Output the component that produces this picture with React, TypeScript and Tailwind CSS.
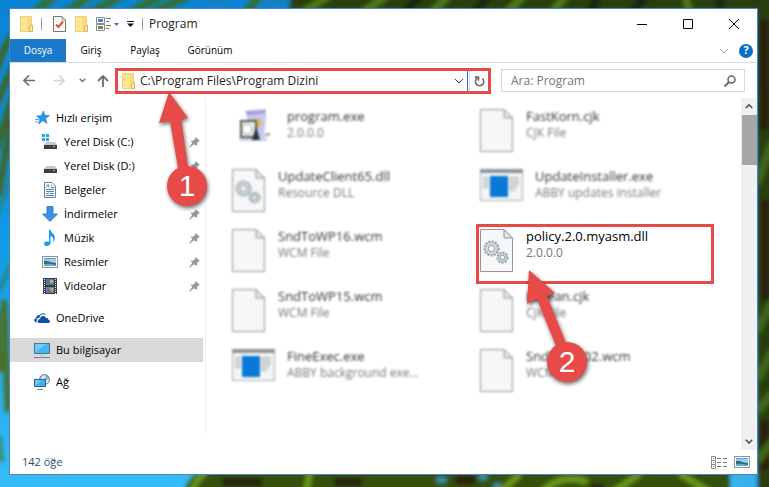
import { useState, type ReactNode } from 'react';

type FileKind = 'installer' | 'gears' | 'page' | 'app';

interface FileEntry {
    name: string;
    detail: string;
    kind: FileKind;
    active?: boolean;
}

const files: FileEntry[] = [
    { name: 'program.exe', detail: '2.0.0.0', kind: 'installer' },
    { name: 'FastKorn.cjk', detail: 'CJK File', kind: 'page' },
    { name: 'UpdateClient65.dll', detail: 'Resource DLL', kind: 'gears' },
    { name: 'UpdateInstaller.exe', detail: 'ABBY updates installer', kind: 'app' },
    { name: 'SndToWP16.wcm', detail: 'WCM File', kind: 'page' },
    { name: 'policy.2.0.myasm.dll', detail: '2.0.0.0', kind: 'gears', active: true },
    { name: 'SndToWP15.wcm', detail: 'WCM File', kind: 'page' },
    { name: 'Korean.cjk', detail: 'CJK File', kind: 'page' },
    { name: 'FineExec.exe', detail: 'ABBY background exe...', kind: 'app' },
    { name: 'SndToWP02.wcm', detail: 'WCM File', kind: 'page' },
];

/* ---------- desktop ---------- */

function Wallpaper() {
    return (
        <svg className="absolute inset-0 w-full h-full" viewBox="0 0 769 487" preserveAspectRatio="none" aria-hidden="true">
            <defs>
                <linearGradient id="sky" x1="0" y1="0" x2="0" y2="1">
                    <stop offset="0" stopColor="#0a84d4" />
                    <stop offset="0.5" stopColor="#0f9be6" />
                    <stop offset="1" stopColor="#36bcf6" />
                </linearGradient>
                <filter id="soft" x="-20%" y="-20%" width="140%" height="140%"><feGaussianBlur stdDeviation="2" /></filter>
            </defs>
            <rect width="769" height="487" fill="url(#sky)" />
            <g filter="url(#soft)">
                <path d="M290 -20H790V510H757V10H290Z" fill="#2b3d10" />
                <path d="M180 510Q185 474 205 470H730V510Z" fill="#35500f" />
                <g fill="none">
                    <path d="M30 16 62 -10M62 16 98 -10M88 14 132 -10M124 16 172 -10M150 14 200 -10M244 14 262 -6" stroke="#35702f" strokeWidth="8" />
                    <path d="M206 0H230M262 0H290" stroke="#1d7eae" strokeWidth="6" />
                    <path d="M300 14 335 -8M360 14 392 -8M430 14 452 -8M505 14 528 -8M550 14 570 -8M690 14 684 -8" stroke="#4d7a18" strokeWidth="7" />
                    <path d="M405 14 422 -8M475 14 490 -8M590 14 600 -8M630 14 650 -8M720 10V-8" stroke="#1e2608" strokeWidth="9" />
                    <path d="M-4 72Q4 44 14 34M-4 106Q4 84 14 66M-4 150 14 92M-2 196 12 118" stroke="#3f6420" strokeWidth="7" />
                    <path d="M-4 216Q4 200 12 172M-2 292 12 262" stroke="#2c8078" strokeWidth="4" />
                    <path d="M4 300 8 412M-3 310 0 372" stroke="#4f6a18" strokeWidth="6" />
                    <path d="M-1 436 2 462" stroke="#3f7f4e" strokeWidth="4" />
                    <path d="M190 496Q196 478 206 472M310 472 306 492M500 492 520 474M540 494Q560 472 588 482M610 494 640 474M680 474 710 492" stroke="#6a9a1c" strokeWidth="6" />
                    <path d="M222 482H262M334 482H362M455 480H476M590 488H604" stroke="#2a2408" strokeWidth="9" />
                    <path d="M437 480H446M479 477H487M494 486H500" stroke="#3f9fb4" strokeWidth="5" />
                    <path d="M764 20V130M765 200V300M764 420V470" stroke="#2c210f" strokeWidth="10" />
                    <path d="M757 184 773 140M757 332 773 300M757 380 773 350M757 412 773 392M757 462 773 440" stroke="#41661a" strokeWidth="8" />
                </g>
                <path d="M730 470H756L758 500H736Z" fill="#37b2ec" />
            </g>
        </svg>
    );
}

/* ---------- small icons ---------- */

function FolderIcon() {
    return (
        <svg width="14" height="16" viewBox="0 0 14 16" className="shrink-0" aria-hidden="true">
            <path d="M.5.5H11.500V9.500L12.500 10V15.500H.5Z" fill="#fbdc79" stroke="#efd07a" />
            <path d="M1 1H7V15H1Z" fill="#fde594" />
            <path d="M9.500 15.500V11L10.500 9.500H12.500V15.500Z" fill="#fdeaa8" stroke="#dcb54c" />
        </svg>
    );
}

function CheckPageIcon() {
    return (
        <svg width="13" height="16" viewBox="0 0 13 16" aria-hidden="true">
            <path d="M.5.5H9L12.500 4V15.500H.5Z" fill="#fafafa" stroke="#747474" />
            <path d="M9 .5V4H12.500" fill="none" stroke="#999" />
            <path d="M3 8.500 5.500 11 10 5.500" fill="none" stroke="#e8501c" strokeWidth="2" />
        </svg>
    );
}

function LayoutIcon() {
    return (
        <svg width="15" height="16" viewBox="0 0 15 16" aria-hidden="true">
            <path d="M.5 1.500H8.500V7.500H.5ZM.5 8.500H8.500V14.500H.5Z" fill="#fff" stroke="#8b8b8b" />
            <rect x="2" y="3" width="5" height="3" fill="#3c86d8" />
            <path d="M2 10H7V13H2Z" fill="#4c9850" />
            <path d="M4 10H7V12H5Z" fill="#d35a3c" />
            <path d="M10 2.500H15M10 5.500H13M10 9.500H15M10 12.500H13" stroke="#777" />
        </svg>
    );
}

function Chevron({ up = false, className }: { up?: boolean; className: string }) {
    return (
        <svg viewBox="0 0 10 6" className={className} fill="none" stroke="currentColor" aria-hidden="true">
            <path d={up ? 'M1 5 5 1 9 5' : 'M1 1 5 5 9 1'} />
        </svg>
    );
}

function StarIcon() {
    return (
        <svg width="15" height="14" viewBox="0 0 15 14" aria-hidden="true">
            <path d="M8.500 0 9.700 4.300 14.500 4.600 10.600 7.400 12 12.500 7.900 9.600 3.700 13 5 8.200 1.500 5 6.300 4.600Z" fill="#2798e4" stroke="#1877bd" strokeWidth=".6" />
            <path d="M0 8.500H4M0 11H3.500M2 5.500H4" stroke="#52aee8" />
        </svg>
    );
}

function DriveIcon({ system = false }: { system?: boolean }) {
    return (
        <svg width="16" height="16" viewBox="0 0 16 16" aria-hidden="true">
            <path d="M4 8H13L15 11H2Z" fill="#c7c7c7" />
            {system && <path d="M0 0H3V3H0ZM4 0H7V3H4ZM0 4H3V7H0ZM4 4H7V7H4Z" fill="#1fa7ee" />}
            <rect x="2" y="11" width="13" height="4" fill="#3e4144" />
            <rect x="11" y="12" width="2" height="1" fill="#3ef05a" />
        </svg>
    );
}

function DocumentIcon() {
    return (
        <svg width="16" height="16" viewBox="0 0 16 16" aria-hidden="true">
            <path d="M2.500.5H10L13.500 4V15.500H2.500Z" fill="#fff" stroke="#7a7f85" />
            <path d="M4 5.500 6 2.500 7 5.500M9 3.500H10M9 5.500H12M4 7.500H12M4 9.500H12M4 11.500H7M8 11.500H12M4 13.500H12" fill="none" stroke="#4087c4" />
        </svg>
    );
}

function DownloadIcon() {
    return (
        <svg width="16" height="16" viewBox="0 0 16 16" aria-hidden="true">
            <path d="M5 .5H11V8H15.500L8 15.500.5 8H5Z" fill="#3b93e3" stroke="#2575c2" strokeWidth=".8" />
        </svg>
    );
}

function MusicIcon() {
    return (
        <svg width="16" height="16" viewBox="0 0 16 16" aria-hidden="true">
            <path d="M7 0H8.500C9 3 13 4 13 8 13 9.500 12 11 11 12 12 8.500 11 7 8.500 6V13C8.500 15 6.500 16 4.700 16 3 16 2 15 2 13.800 2 12 4.500 11 7 12Z" fill="#159cf0" />
        </svg>
    );
}

function PictureIcon() {
    return (
        <svg width="16" height="12" viewBox="0 0 16 12" aria-hidden="true">
            <rect x=".5" y=".5" width="15" height="11" fill="#fff" stroke="#8d9298" />
            <rect x="2" y="2" width="12" height="8" fill="#9ccdf0" />
            <path d="M2 2H14V3H2Z" fill="#5b9be0" />
            <path d="M2 5Q5 4 8 6L14 7V10H2Z" fill="#2f6f76" />
            <path d="M2 8Q8 7 14 9V10H2Z" fill="#69a8c9" />
        </svg>
    );
}

function VideoIcon() {
    return (
        <svg width="16" height="16" viewBox="0 0 16 16" aria-hidden="true">
            <rect x="1" y="0" width="14" height="16" fill="#3a3a3a" />
            <path d="M2.500 1V16M13.500 1V16" stroke="#f4f4f4" strokeDasharray="1 1" />
            <rect x="4" y="1" width="8" height="6" fill="#3f78d6" />
            <rect x="4" y="9" width="8" height="6" fill="#4c86dc" />
            <path d="M5 5 7 3 8 5ZM4 14 7 11 9 14Z" fill="#d6414e" />
            <path d="M8 2H11V5H8ZM8 10H11V13H9Z" fill="#e8a72e" />
            <path d="M4 6H12V7H4Z" fill="#4d9a43" />
        </svg>
    );
}

function CloudIcon() {
    return (
        <svg width="16" height="10" viewBox="0 0 16 10" aria-hidden="true">
            <path d="M3 9.500C-.5 9.500-.7 5.500 2.200 5.200 2 2.500 4.700 1.700 5.700 2.200 7.200-.7 11.500-.5 12.200 2.500 9-.1 5.500 2 5.600 4.700 2.500 4.700 2 7.500 3 9.500Z" fill="#0f4fae" />
            <path d="M5.500 10C3 10 3 6 6 6 6.200 2.300 11 2.200 12 5 14 4.700 14.500 6 14.300 6.800 16.500 7 16.400 10 14.300 10Z" fill="#0f4fae" />
        </svg>
    );
}

function ComputerIcon() {
    return (
        <svg width="16" height="16" viewBox="0 0 16 16" aria-hidden="true">
            <rect x=".5" y="1.500" width="15" height="10" fill="#45b4f5" stroke="#4b7592" />
            <path d="M1 11 12 2H1Z" fill="#74caf9" />
            <path d="M0 15.500H16" stroke="#6a8396" />
            <path d="M6 13.500H10" stroke="#b5bcc2" />
        </svg>
    );
}

function NetworkIcon() {
    return (
        <svg width="16" height="16" viewBox="0 0 16 16" aria-hidden="true">
            <circle cx="10.500" cy="5.500" r="5" fill="#87b6c9" stroke="#4d7f98" strokeWidth=".8" />
            <path d="M8 2Q11 0 12 3L10 5 7 5ZM12 6 15 5 14 9 12 9Z" fill="#d7e9ec" />
            <rect x=".5" y="5.500" width="11" height="7" fill="#42b0f4" stroke="#34668a" />
            <path d="M1 12 8 6H1Z" fill="#6fc6f8" />
            <path d="M3 15.500H9" stroke="#6a8396" />
        </svg>
    );
}

function PinIcon() {
    return (
        <svg width="11" height="11" viewBox="0 0 11 11" className="shrink-0" aria-hidden="true">
            <path d="M6.500 0 11 4 9.500 4.500 8 6.500 7.500 9 5 7.300 1 10.500 0 10.500 3.300 6 1.500 3.800 4.500 3.500 6.200 1.800Z" fill="#8e99a4" />
        </svg>
    );
}

/* ---------- big file icons ---------- */

function Gear({ cx, cy, r }: { cx: number; cy: number; r: number }) {
    return (
        <g fill="none" stroke="#8d9aa4">
            <circle cx={cx} cy={cy} r={r} fill="#d5dde2" strokeWidth="2" strokeDasharray="2 1.300" />
            <circle cx={cx} cy={cy} r={r - 1} fill="#d5dde2" stroke="#b3bfc7" />
            <circle cx={cx} cy={cy} r={r / 2.2} fill="#f7f9fa" />
        </g>
    );
}

function PageIcon({ gears = false }: { gears?: boolean }) {
    return (
        <svg width="33" height="43" viewBox="0 0 33 43" className="shrink-0" aria-hidden="true">
            <path d="M.5.5H24L32.500 9V42.500H.5Z" fill="#f5f7f8" stroke="#949494" />
            <path d="M24 .5V9H32.500Z" fill="#e6e8e9" stroke="#949494" />
            {gears && <Gear cx={11.5} cy={19.5} r={7} />}
            {gears && <Gear cx={22.5} cy={28.5} r={5} />}
        </svg>
    );
}

function AppIcon() {
    return (
        <svg width="43" height="32" viewBox="0 0 43 32" className="shrink-0" aria-hidden="true">
            <rect x=".5" y=".5" width="42" height="31" fill="#f3f4f5" stroke="#a9adb0" />
            <rect width="43" height="4" fill="#8f9498" />
            <path d="M3 9H9M3 12H9M3 15H9M3 18H9M29 9H39M29 12H39M29 15H39M29 18H37M29 21H35" stroke="#c0c4c7" strokeWidth="2" />
            <rect x="10" y="7" width="18" height="21" fill="#0a78d7" />
        </svg>
    );
}

function InstallerIcon() {
    return (
        <svg width="43" height="33" viewBox="0 0 43 33" className="shrink-0" aria-hidden="true">
            <path d="M14 2 34 0 34 8 32 28 18 30Z" fill="#c6c6ef" />
            <path d="M13 2 33 1 34 4 15 6Z" fill="#9f9fd8" />
            <path d="M7 28H34L36 32H8Z" fill="#cdcdf0" />
            <path d="M20 10 29 11V18H20Z" fill="#efb640" />
            <path d="M9 12H24V28H9Z" fill="#eef3ee" stroke="#565a54" strokeWidth="2" />
            <circle cx="15" cy="20" r="5" fill="#fff" stroke="#9aa09a" />
            <path d="M24 17 28 31H20Z" fill="#27323f" />
            <path d="M33 26 38 25" stroke="#8a8a8a" strokeWidth="2" />
        </svg>
    );
}

const bigIcons: Record<FileKind, ReactNode> = {
    installer: <InstallerIcon />,
    gears: <PageIcon gears />,
    page: <PageIcon />,
    app: <AppIcon />,
};

/* ---------- callouts ---------- */

function Callout({ label, className, arrow, cx, cy }: { label: string; className: string; arrow: string; cx: number; cy: number }) {
    return (
        <svg width="80" height="126" viewBox="0 0 80 126" className={className}>
            <g className="drop-shadow-[1px_2px_2px_rgba(0,0,0,0.6)]" fill="#e84a4a">
                <path d={arrow} />
                <circle cx={cx} cy={cy} r="20" />
            </g>
            <text x={cx} y={cy + 10} textAnchor="middle" fill="#fff" className="font-['Liberation_Sans',sans-serif] text-[30px]">{label}</text>
        </svg>
    );
}

/* ---------- window parts ---------- */

function TitleBar() {
    return (
        <header className="flex h-[30px] items-center pl-[10px]">
            <FolderIcon />
            <span className="ml-[7px] h-3 w-px bg-gray-400" />
            <button aria-label="Özellikler" className="ml-[11px]"><CheckPageIcon /></button>
            <button aria-label="Yeni klasör" className="ml-[9px]"><FolderIcon /></button>
            <button aria-label="Düzen" className="ml-[7px] flex items-center gap-[3px]">
                <LayoutIcon />
                <svg width="5" height="3" viewBox="0 0 5 3" aria-hidden="true"><path d="M0 0H5L2.500 3Z" fill="#3f72b8" /></svg>
            </button>
            <button aria-label="Hızlı erişim araç çubuğunu özelleştir" className="ml-2">
                <svg width="7" height="6" viewBox="0 0 7 6" aria-hidden="true"><path d="M0 .5H7" stroke="#111" /><path d="M0 2.500H7L3.500 6Z" fill="#111" /></svg>
            </button>
            <span className="ml-2 h-3 w-px bg-gray-400" />
            <h1 className="ml-[6px] flex-1 text-[#222]">Program</h1>
            <div className="flex text-black">
                <button aria-label="Simge durumuna küçült" className="flex w-[46px] justify-center">
                    <svg width="10" height="10" viewBox="0 0 10 10" stroke="currentColor"><path d="M0 5.500H10" /></svg>
                </button>
                <button aria-label="Ekranı kapla" className="flex w-[46px] justify-center">
                    <svg width="10" height="10" viewBox="0 0 10 10" fill="none" stroke="currentColor"><path d="M.5.5H9.500V9.500H.5Z" /></svg>
                </button>
                <button aria-label="Kapat" className="flex w-[46px] justify-center">
                    <svg width="10" height="10" viewBox="0 0 10 10" stroke="currentColor"><path d="M0 0 10 10M10 0 0 10" /></svg>
                </button>
            </div>
        </header>
    );
}

function Ribbon() {
    return (
        <div className="flex h-6 items-stretch border-b border-[#dadbdc] text-[10px] text-black">
            <button className="w-14 bg-[#1979ca] pt-px text-white">Dosya</button>
            <button className="w-[50px] pt-px">Giriş</button>
            <button className="w-[58px] pt-px">Paylaş</button>
            <button className="w-[72px] pt-px">Görünüm</button>
            <div className="ml-auto flex items-center gap-[10px] pr-1">
                <button aria-label="Şeridi genişlet" className="text-gray-400"><Chevron className="w-[10px]" /></button>
                <button aria-label="Yardım" className="flex size-[14px] items-center justify-center rounded-full bg-[#0b6fc8] text-[11px] font-bold text-white">?</button>
            </div>
        </div>
    );
}

function AddressRow() {
    const [path, setPath] = useState('C:\\Program Files\\Program Dizini');
    const [query, setQuery] = useState('');

    return (
        <div className="flex h-[35px] items-center pl-[13px] pr-3">
            <button aria-label="Geri" className="text-[#6b6b6b]">
                <svg width="12" height="11" viewBox="0 0 12 11" fill="none" stroke="currentColor" strokeWidth="1.600"><path d="M6 .5 1 5.500 6 10.500M1 5.500H12" /></svg>
            </button>
            <button aria-label="İleri" className="ml-[18px] text-[#d4d4d4]">
                <svg width="12" height="11" viewBox="0 0 12 11" fill="none" stroke="currentColor" strokeWidth="1.600"><path d="M6 .5 11 5.500 6 10.500M11 5.500H0" /></svg>
            </button>
            <button aria-label="Son konumlar" className="ml-[14px] text-gray-500">
                <Chevron className="w-[7px] stroke-2" />
            </button>
            <button aria-label="Yukarı" className="ml-[11px] text-[#6b6b6b]">
                <svg width="12" height="12" viewBox="0 0 12 12" fill="none" stroke="currentColor" strokeWidth="1.800"><path d="M1 6 6 1 11 6M6 1V12" /></svg>
            </button>

            <div className="relative ml-[6px] flex h-[26px] flex-[370] items-stretch border-3 border-[#e84a4a]">
                <div className="flex min-w-0 flex-1 items-center border-r border-[#1979ca] pl-1">
                    <FolderIcon />
                    <input
                        aria-label="Adres"
                        value={path}
                        onChange={(e) => setPath(e.target.value)}
                        className="ml-1 min-w-0 flex-1 bg-transparent text-[#222] outline-none"
                    />
                    <button aria-label="Önceki konumlar" className="mr-[3px] text-[#444]"><Chevron className="w-[10px]" /></button>
                </div>
                <button aria-label="Yenile" className="ml-px flex w-[19px] items-center justify-center border-l border-[#d9d9d9] text-[#6b6b6b]">
                    <svg width="11" height="12" viewBox="0 0 11 12" fill="none" stroke="currentColor" strokeWidth="1.600">
                        <path d="M3.500 2.900A4.200 4.200 0 1 0 8.500 3.500M1 2.100H4.500V5.800" />
                    </svg>
                </button>
                <Callout
                    label="1"
                    className="pointer-events-none absolute top-[18px] left-[36px] z-10"
                    arrow="M15 3 34 29 27 30 34 78 24 79 16 32 5 34Z"
                    cx={33}
                    cy={97}
                />
            </div>

            <div className="ml-[10px] flex h-[23px] flex-[225] items-center border border-[#d9d9d9] pl-[9px] pr-2">
                <input
                    type="search"
                    aria-label="Ara: Program"
                    placeholder="Ara: Program"
                    value={query}
                    onChange={(e) => setQuery(e.target.value)}
                    className="min-w-0 flex-1 bg-transparent outline-none placeholder:text-[#767676]"
                />
                <svg width="12" height="12" viewBox="0 0 12 12" fill="none" stroke="#6b6b6b" aria-hidden="true">
                    <circle cx="7.500" cy="4.500" r="3.500" strokeWidth="1.600" />
                    <path d="M5 7 .5 11.500" strokeWidth="2" />
                </svg>
            </div>
        </div>
    );
}

function NavItem({ icon, label, child, pinned, active }: { icon: ReactNode; label: string; child?: boolean; pinned?: boolean; active?: boolean }) {
    return (
        <a
            href="#"
            className={`flex h-6 items-center pr-[3px] ${child ? 'pl-8' : 'pl-6'} ${active ? 'bg-[#d9d9d9]' : ''}`}
        >
            <span className="flex w-4 shrink-0 justify-center">{icon}</span>
            <span className="ml-[6px] flex-1 whitespace-nowrap">{label}</span>
            {pinned && <PinIcon />}
        </a>
    );
}

function Sidebar() {
    return (
        <nav className="mb-4 flex w-[196px] shrink-0 flex-col gap-2 border-r border-[#f0f0f0] pt-2 pr-[2px] text-[11px] text-black">
            <div>
                <NavItem icon={<StarIcon />} label="Hızlı erişim" />
                <NavItem child pinned icon={<DriveIcon system />} label="Yerel Disk (C:)" />
                <NavItem child pinned icon={<DriveIcon />} label="Yerel Disk (D:)" />
                <NavItem child pinned icon={<DocumentIcon />} label="Belgeler" />
                <NavItem child pinned icon={<DownloadIcon />} label="İndirmeler" />
                <NavItem child pinned icon={<MusicIcon />} label="Müzik" />
                <NavItem child pinned icon={<PictureIcon />} label="Resimler" />
                <NavItem child pinned icon={<VideoIcon />} label="Videolar" />
            </div>
            <NavItem icon={<CloudIcon />} label="OneDrive" />
            <NavItem active icon={<ComputerIcon />} label="Bu bilgisayar" />
            <NavItem icon={<NetworkIcon />} label="Ağ" />
        </nav>
    );
}

function FileItem({ file }: { file: FileEntry }) {
    const wide = file.kind === 'app' || file.kind === 'installer';

    return (
        <li className={`relative flex h-[60px] ${file.active ? 'border-3 border-[#e84a4a] pl-px text-black' : 'pt-[3px] pl-1 text-[#333] blur-[1px]'}`}>
            <span className="shrink-0 pt-[2px]">{bigIcons[file.kind]}</span>
            <div className={`min-w-0 whitespace-nowrap ${wide ? 'ml-3' : 'ml-[13px]'}`}>
                <p className="text-[13px] leading-[18px]">{file.name}</p>
                <p className="leading-4 text-[#777]">{file.detail}</p>
            </div>
            {file.active && (
                <Callout
                    label="2"
                    className="pointer-events-none absolute top-[40px] left-[37px] z-10"
                    arrow="M13 3 39 26 31 29 50 76 40 79 21 32 11 37Z"
                    cx={51}
                    cy={95}
                />
            )}
        </li>
    );
}

function ScrollBar() {
    return (
        <div className="flex w-4 shrink-0 flex-col items-center bg-[#f0f0f0] text-[#505050]">
            <button aria-label="Yukarı kaydır" className="flex h-[17px] w-full items-center justify-center"><Chevron up className="w-2 stroke-2" /></button>
            <div className="h-[50px] w-[15px] bg-[#a6a6a6]" />
            <button aria-label="Aşağı kaydır" className="mt-auto flex h-[17px] w-full items-center justify-center"><Chevron className="w-2 stroke-2" /></button>
        </div>
    );
}

function StatusBar() {
    return (
        <footer className="flex h-6 items-center pr-[7px] pl-3 text-[11px] text-[#2b4a74]">
            <span className="flex-1">142 öğe</span>
            <button aria-label="Ayrıntılar" className="mr-[7px]">
                <svg width="16" height="13" viewBox="0 0 16 13" fill="none" aria-hidden="true">
                    <path d="M.5.5H4.500V12.500H.5ZM.5 4.500H4.500M.5 8.500H4.500" stroke="#8a8a8a" />
                    <path d="M6 2.500H10M12 2.500H16M6 6.500H10M12 6.500H16M6 10.500H10M12 10.500H16" stroke="#777" />
                    <path d="M2 2.500H3" stroke="#2a9d5c" />
                    <path d="M2 6.500H3" stroke="#2a6fd0" />
                    <path d="M2 10.500H3" stroke="#d0203a" />
                </svg>
            </button>
            <button aria-label="Büyük simgeler"><PictureIcon /></button>
        </footer>
    );
}

export default function App() {
    return (
        <div className="relative flex min-h-screen overflow-hidden pt-2 pr-[11px] pb-3 pl-[9px] font-['Open_Sans','Noto_Sans',sans-serif] text-xs">
            <Wallpaper />
            <main className="relative flex min-w-0 flex-1 flex-col border border-[#4a84c6] bg-white">
                <TitleBar />
                <Ribbon />
                <AddressRow />
                <div className="flex flex-1 items-stretch">
                    <Sidebar />
                    <ul className="grid min-w-0 flex-1 auto-rows-[60px] grid-cols-2 gap-x-[10px] pt-[6px] pr-[27px] pl-[22px]">
                        {files.map((file) => (
                            <FileItem key={file.name} file={file} />
                        ))}
                    </ul>
                    <ScrollBar />
                </div>
                <StatusBar />
            </main>
        </div>
    );
}
